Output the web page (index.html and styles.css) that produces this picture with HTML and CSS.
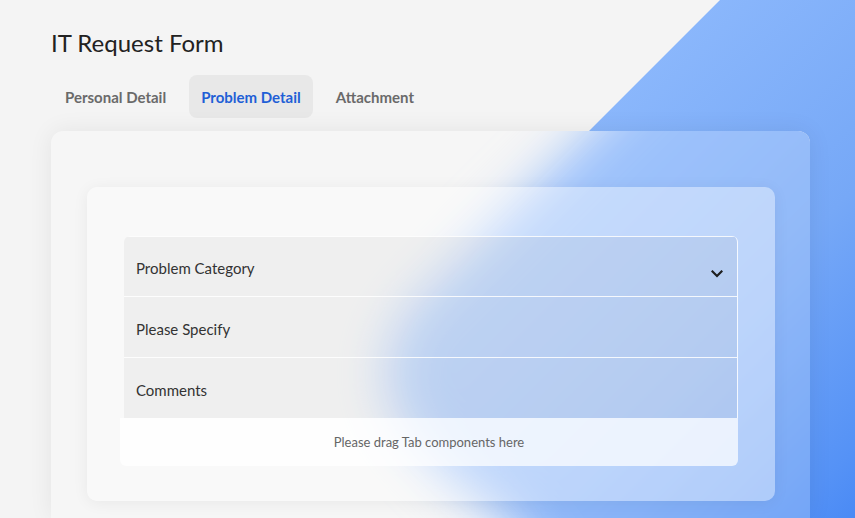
FILE: index.html
```html
<!DOCTYPE html>
<html lang="en">
<head>
<meta charset="utf-8">
<title>IT Request Form</title>
<link rel="stylesheet" href="styles.css">
</head>
<body>
<main class="page">
  <h1 class="title">IT Request Form</h1>
  <nav class="tabs">
    <button class="tab">Personal Detail</button>
    <button class="tab tab-active">Problem Detail</button>
    <button class="tab">Attachment</button>
  </nav>
  <section class="outer-card">
    <div class="backdrop" aria-hidden="true"><div class="blob blob-copy"></div></div>
    <div class="inner-card">
      <div class="fields">
        <div class="field field-select">
          <span>Problem Category</span>
          <svg class="chevron" width="12" height="8" viewBox="0 0 12 8"><polyline points="1.5,1.5 6,6 10.5,1.5" fill="none" stroke="#1f1f1f" stroke-width="2.2" stroke-linecap="square"/></svg>
        </div>
        <div class="field"><span>Please Specify</span></div>
        <div class="field"><span>Comments</span></div>
      </div>
      <div class="drop">Please drag Tab components here</div>
    </div>
  </section>
</main>
</body>
</html>
```
FILE: styles.css
```css
html, body {
  margin: 0;
  height: 518px;
  overflow: hidden;
}
body {
  background: #f4f4f4;
  font-family: Lato, "Noto Sans", sans-serif;
  position: relative;
}
body::before,
.blob {
  content: "";
  position: absolute;
  background: linear-gradient(135deg, #8cb8fc 44.3%, #76a8f7 67.3%, #5592f6 84.2%, #4a8af5 88.6%, #4182f4 100%) 0 0 / 950px 600px no-repeat;
  clip-path: polygon(720px 0, 950px 0, 950px 600px, 565px 600px, 505px 518px, 466px 490px, 428px 457px, 400px 422px, 386px 386px, 389px 350px, 403px 318px, 425px 293px, 452px 268px);
}
body::before {
  top: 0;
  left: 0;
  width: 855px;
  height: 518px;
  z-index: 0;
}
.blob-copy {
  top: -131px;
  left: -51px;
  width: 950px;
  height: 600px;
}
.page {
  position: relative;
  z-index: 1;
  padding: 28px 0 0 51px;
}
.title {
  margin: 0;
  font-size: 24px;
  line-height: 30px;
  font-weight: 400;
  color: #222;
}
.tabs {
  display: flex;
  gap: 11px;
  margin: 17px 0 0 2px;
}
.tab {
  border: none;
  background: transparent;
  border-radius: 8px;
  padding: 13px 12px 11px;
  font-family: inherit;
  font-size: 15px;
  line-height: 19px;
  font-weight: 700;
  color: #6a6a6a;
}
.tab-active {
  background: #e8e8e8;
  color: #1f5fd6;
}
.outer-card {
  position: relative;
  isolation: isolate;
  overflow: hidden;
  margin-top: 13px;
  width: 759px;
  height: 387px;
  box-sizing: border-box;
  padding: 56px 35px 0 36px;
  border-radius: 12px 12px 0 0;
  background: #f4f4f4;
  box-shadow: 0 0 24px rgba(0, 0, 0, 0.07);
}
.backdrop {
  position: absolute;
  inset: 0;
  z-index: 0;
  filter: blur(25px);
}
.outer-card::before {
  content: "";
  position: absolute;
  inset: 0;
  z-index: 1;
  background: rgba(255, 255, 255, 0.2);
}
.inner-card {
  position: relative;
  z-index: 2;
  height: 314px;
  box-sizing: border-box;
  padding: 49px 37px 35px 33px;
  border-radius: 10px;
  background: rgba(255, 255, 255, 0.4);
  box-shadow: 0 2px 16px rgba(0, 0, 0, 0.06);
}
.fields {
  margin-left: 4px;
  border-right: 1px solid rgba(255, 255, 255, 0.85);
  border-radius: 6px 6px 0 0;
  overflow: hidden;
}
.field {
  height: 60px;
  box-sizing: border-box;
  border-top: 1px solid rgba(255, 255, 255, 0.85);
  background: rgba(0, 0, 0, 0.04);
  display: flex;
  align-items: center;
  justify-content: space-between;
  padding: 3px 14px 0 12px;
  font-size: 15px;
  color: #333;
}
.field + .field {
  height: 61px;
}
.chevron {
  margin-top: 12px;
}
.drop {
  height: 48px;
  display: flex;
  align-items: center;
  justify-content: center;
  background: rgba(255, 255, 255, 0.72);
  border-radius: 0 0 6px 6px;
  font-size: 13px;
  color: #666;
}
```
